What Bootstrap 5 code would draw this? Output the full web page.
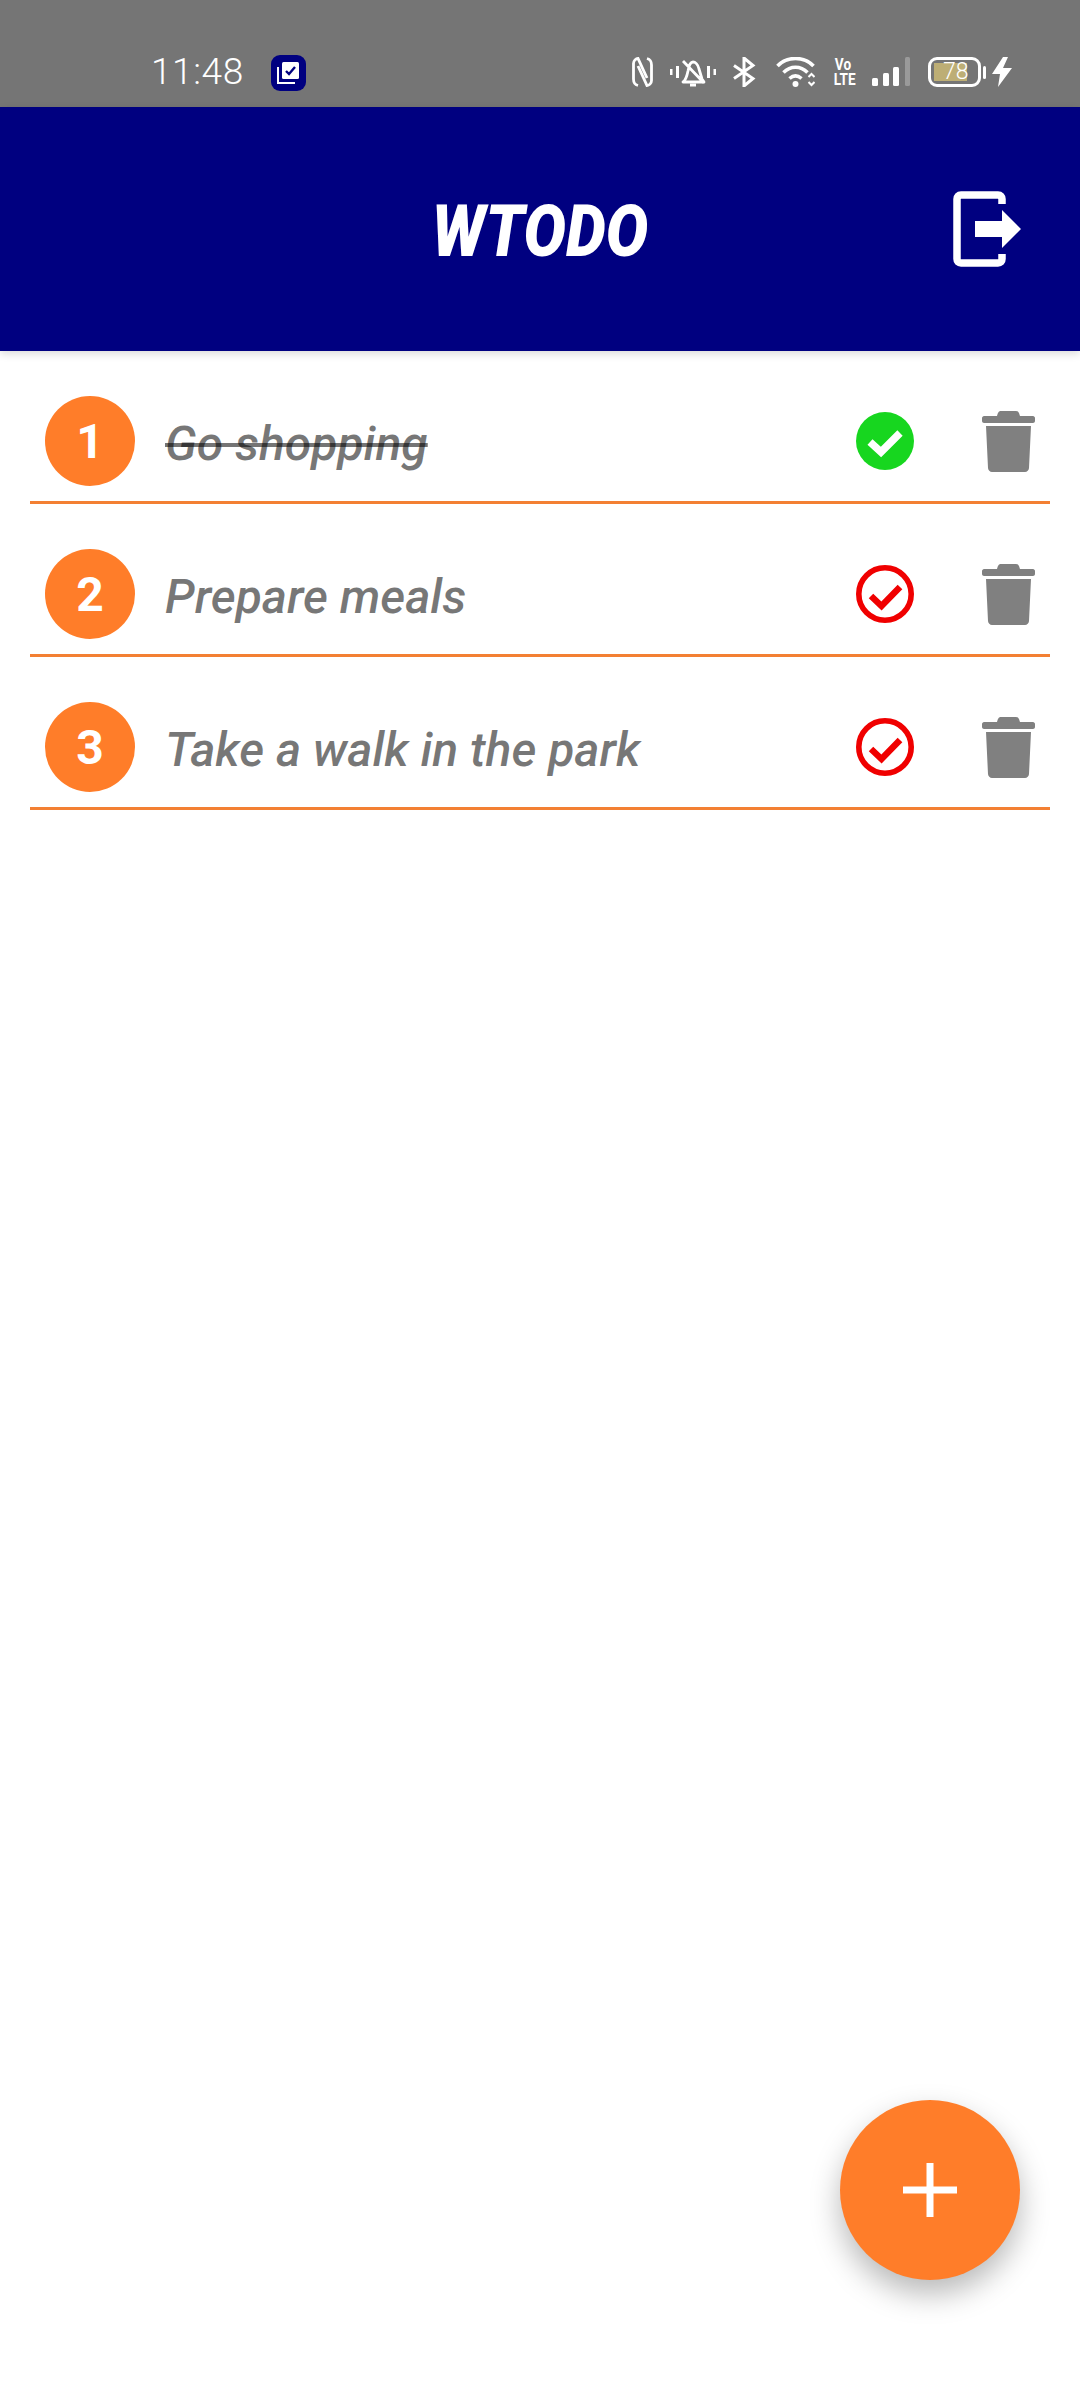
<!DOCTYPE html>
<html lang="en">
  <head>
    <meta charset="UTF-8" />
    <meta name="viewport" content="width=device-width, initial-scale=1.0" />
    <title>WTODO</title>
    <link href="https://cdn.jsdelivr.net/npm/bootstrap@5.3.3/dist/css/bootstrap.min.css" rel="stylesheet" />
    <script src="https://cdn.jsdelivr.net/npm/bootstrap@5.3.3/dist/js/bootstrap.bundle.min.js"></script>
    <style>
      body {
        font-family: Roboto, "Liberation Sans", sans-serif;
        background: #fff;
        min-height: 2400px;
        position: relative;
      }
      .status-strip {
        height: 107px;
        background: #757575;
        color: #fff;
        padding: 50px 0 0 151px;
      }
      .status-time {
        font-weight: 300;
        font-size: 37px;
        line-height: 44px;
        letter-spacing: 0.6px;
      }
      .status-app { margin: 5px 0 0 27px; }
      .status-right { margin: 7px 68px 0 auto; }
      .ico-nfc { margin-right: 17px; }
      .ico-bell { margin-right: 17px; }
      .ico-bt { margin-right: 20px; }
      .ico-wifi { margin-right: 17px; }
      .ico-bars { margin-right: 18px; }
      .volte {
        font-size: 16px;
        font-weight: 700;
        line-height: 15px;
        width: 22px;
        margin-right: 18px;
        text-align: center;
        transform: scaleX(0.85);
      }
      .batt-box {
        width: 53px;
        height: 30px;
        border: 3px solid #fff;
        border-radius: 9px;
        padding: 3px;
        font-size: 23px;
        font-weight: 300;
        line-height: 18px;
      }
      .batt-fill {
        display: block;
        width: 33px;
        height: 18px;
        background: #bdae75;
        padding-left: 9px;
        white-space: nowrap;
      }
      .ico-nub { margin: 9px 5px 0 2px; }
      .app-header {
        height: 244px;
        background: #000080;
        box-shadow: 0 3px 8px rgba(0, 0, 0, 0.14);
        position: relative;
      }
      .app-title {
        font-size: 72px;
        font-weight: 900;
        font-style: italic;
        color: #fff;
        transform: scaleX(0.88);
        line-height: 1;
        margin: 5px 0 0;
      }
      .logout-btn { position: absolute; left: 953px; top: 84px; }
      .todo-row {
        height: 153px;
        margin: 0 30px;
        padding: 45px 15px 15px;
        border-bottom: 3px solid #f38033;
      }
      .num-dot {
        width: 90px;
        height: 90px;
        padding-top: 2px;
        background: #ff7d29;
        color: #fff;
        font-size: 48px;
        font-weight: 700;
        flex: none;
      }
      .todo-text {
        font-size: 48px;
        font-style: italic;
        font-weight: 500;
        color: rgba(0, 0, 0, 0.54);
        margin: 5px 0 0 30px;
        line-height: 1;
        white-space: nowrap;
      }
      .todo-done { text-decoration: line-through; }
      .check-ico { margin-right: 68px; }
      .fab-add {
        position: absolute;
        left: 840px;
        top: 2100px;
        width: 180px;
        height: 180px;
        background: #ff7d29;
        border: 0;
        box-shadow: 0 14px 30px rgba(0, 0, 0, 0.28);
      }
    </style>
  </head>
  <body>
    <div class="status-strip d-flex align-items-start">
      <span class="status-time">11:48</span>
      <svg class="status-app" width="35" height="36" viewBox="0 0 35 36">
        <rect width="35" height="36" rx="9" fill="#000080" />
        <path d="M7 12v16h17" fill="none" stroke="#fff" stroke-width="2" />
        <rect x="11" y="7" width="17" height="17" rx="1.5" fill="#fff" />
        <path d="M15 16l3 3 6-7" fill="none" stroke="#000080" stroke-width="2.4" />
      </svg>
      <div class="status-right d-flex align-items-start">
        <svg class="ico-nfc" width="21" height="30" viewBox="0 0 21 30">
          <path d="M6 28.500C2.500 27.500 1.500 26 1.500 22V6.500C1.500 3.500 4 1.500 6 1.500L15 21M15 1.500C18.500 2.500 19.500 4 19.500 8V23.500C19.500 26.500 17 28.500 15 28.500L6 9" fill="none" stroke="#fff" stroke-width="2.800" />
        </svg>
        <svg class="ico-bell" width="46" height="30" viewBox="0 0 46 30">
          <path d="M1 12v6M7.500 9v12M38.500 9v12M45 12v6" stroke="#fff" stroke-width="3" />
          <path d="M13 25c3-2 4-6 5-11 1-6 3-9 5-9s5 2 6 7l3 10 2 3zM13 4l21 22" fill="none" stroke="#fff" stroke-width="2.800" stroke-linejoin="round" />
          <path d="M20 28h6" stroke="#fff" stroke-width="3" />
        </svg>
        <svg class="ico-bt" width="23" height="30" viewBox="0 0 23 30">
          <path d="M1 8.500l19 13-9 7.500V1l9 7.500-19 13" fill="none" stroke="#fff" stroke-width="3" />
        </svg>
        <svg class="ico-wifi" width="39" height="30" viewBox="0 0 39 30">
          <path d="M1.500 9C11-1 28-1 37.500 9M7.500 15.500c7-7 17-7 24 0M13.500 21.500c4-3.500 8-3.500 12 0" fill="none" stroke="#fff" stroke-width="3.600" />
          <circle cx="19.500" cy="27" r="3" fill="#fff" />
          <path d="M32.500 20l3-3 3 3M32.500 25l3 3 3-3" fill="none" stroke="#fff" stroke-width="2" />
        </svg>
        <div class="volte">Vo<br />LTE</div>
        <svg class="ico-bars" width="38" height="30" viewBox="0 0 38 30">
          <rect x="0" y="21" width="6" height="8" rx="1.500" fill="#fff" />
          <rect x="11" y="16" width="6" height="13" rx="1.500" fill="#fff" />
          <rect x="21" y="10" width="6" height="19" rx="1.500" fill="#fff" />
          <rect x="33" y="0" width="5" height="29" rx="1.500" fill="#9a9a9a" />
        </svg>
        <div class="batt-box"><span class="batt-fill">78</span></div>
        <svg class="ico-nub" width="4" height="13" viewBox="0 0 4 13">
          <rect width="3" height="13" rx="1.500" fill="#fff" />
        </svg>
        <svg width="20" height="30" viewBox="0 0 20 30">
          <path d="M11 0L0 17h8L6 30 20 11h-9l5-11z" fill="#fff" />
        </svg>
      </div>
    </div>

    <header class="app-header d-flex align-items-center justify-content-center">
      <h1 class="app-title">WTODO</h1>
      <svg class="logout-btn" width="68" height="76" viewBox="0 0 68 76">
        <path d="M49 13V8c0-2.500-1.500-4-4-4H8C5.500 4 4 5.500 4 8v60c0 2.500 1.500 4 4 4h37c2.500 0 4-1.500 4-4v-5" fill="none" stroke="#fff" stroke-width="7.500" />
        <path d="M22 30h27V19l19 19-19 19V46H22z" fill="#fff" />
      </svg>
    </header>

    <main>
      <div class="todo-row d-flex align-items-center">
        <div class="num-dot rounded-circle d-flex align-items-center justify-content-center">1</div>
        <div class="todo-text todo-done flex-grow-1">Go shopping</div>
        <svg class="check-ico" width="58" height="58" viewBox="0 0 58 58">
          <circle cx="29" cy="29" r="29" fill="#17d61f" />
          <path d="M14 30l11 10 19-19" fill="none" stroke="#fff" stroke-width="7.500" />
        </svg>
        <svg width="53" height="61" viewBox="0 0 53 61">
          <path d="M19 0h15c2 0 3 1 4 5h13c1 0 2 1 2 2v3c0 1-1 2-2 2H2c-1 0-2-1-2-2V7c0-1 1-2 2-2h13c1-4 2-5 4-5z" fill="#808080" />
          <path d="M4 15h45l-2 42c0 2-2 4-4 4H10c-2 0-4-2-4-4z" fill="#808080" />
        </svg>
      </div>
      <div class="todo-row d-flex align-items-center">
        <div class="num-dot rounded-circle d-flex align-items-center justify-content-center">2</div>
        <div class="todo-text flex-grow-1">Prepare meals</div>
        <svg class="check-ico" width="58" height="58" viewBox="0 0 58 58">
          <circle cx="29" cy="29" r="26.200" fill="none" stroke="#f00000" stroke-width="5.600" />
          <path d="M15 31l10.500 10L44 22" fill="none" stroke="#f00000" stroke-width="6.500" />
        </svg>
        <svg width="53" height="61" viewBox="0 0 53 61">
          <path d="M19 0h15c2 0 3 1 4 5h13c1 0 2 1 2 2v3c0 1-1 2-2 2H2c-1 0-2-1-2-2V7c0-1 1-2 2-2h13c1-4 2-5 4-5z" fill="#808080" />
          <path d="M4 15h45l-2 42c0 2-2 4-4 4H10c-2 0-4-2-4-4z" fill="#808080" />
        </svg>
      </div>
      <div class="todo-row d-flex align-items-center">
        <div class="num-dot rounded-circle d-flex align-items-center justify-content-center">3</div>
        <div class="todo-text flex-grow-1">Take a walk in the park</div>
        <svg class="check-ico" width="58" height="58" viewBox="0 0 58 58">
          <circle cx="29" cy="29" r="26.200" fill="none" stroke="#f00000" stroke-width="5.600" />
          <path d="M15 31l10.500 10L44 22" fill="none" stroke="#f00000" stroke-width="6.500" />
        </svg>
        <svg width="53" height="61" viewBox="0 0 53 61">
          <path d="M19 0h15c2 0 3 1 4 5h13c1 0 2 1 2 2v3c0 1-1 2-2 2H2c-1 0-2-1-2-2V7c0-1 1-2 2-2h13c1-4 2-5 4-5z" fill="#808080" />
          <path d="M4 15h45l-2 42c0 2-2 4-4 4H10c-2 0-4-2-4-4z" fill="#808080" />
        </svg>
      </div>
    </main>

    <button class="fab-add rounded-circle d-flex align-items-center justify-content-center p-0" type="button" aria-label="Add">
      <svg width="54" height="54" viewBox="0 0 54 54">
        <path d="M23.500 0h7v23.500H54v7H30.500V54h-7V30.500H0v-7h23.500z" fill="#fff" />
      </svg>
    </button>
  </body>
</html>
